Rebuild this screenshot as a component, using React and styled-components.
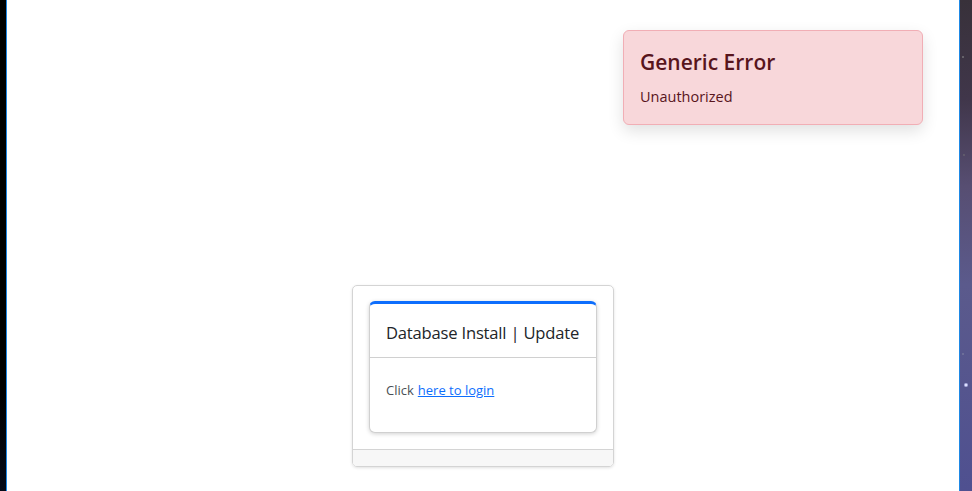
import React from "react";
import styled, { createGlobalStyle } from "styled-components";

const Global = createGlobalStyle`
  html, body {
    margin: 0;
    padding: 0;
    height: 491px;
    overflow: hidden;
  }
  body {
    font-family: "Open Sans", "Noto Sans", sans-serif;
  }
  #root {
    height: 100%;
  }
`;

const Desktop = styled.div`
  display: flex;
  height: 491px;
  width: 972px;
`;

const LeftEdge = styled.div`
  width: 6px;
  background: linear-gradient(to bottom, #000 0%, #000 80%, #050a18 100%);
`;

const RightEdge = styled.div`
  width: 12px;
  background:
    radial-gradient(circle at 6px 385px, #fff 0, #cfd3ff 1px, transparent 2.5px),
    radial-gradient(circle at 3px 57px, #8a8a8a 0, transparent 1.5px),
    radial-gradient(circle at 4px 155px, #777 0, transparent 1.2px),
    radial-gradient(circle at 3px 354px, #8a8fa8 0, transparent 1.2px),
    linear-gradient(to bottom, #38313a 0%, #40364a 20%, #574e72 38%, #5b5a8c 58%, #4f5090 100%);
`;

const Window = styled.main`
  position: relative;
  flex: 1;
  background: #fff;
  border-left: 1px solid #1e88e5;
  border-right: 1px solid #1e88e5;
  display: flex;
  flex-direction: column;
  align-items: center;
  padding-top: 285px;
  box-sizing: border-box;
`;

const Toast = styled.div`
  position: absolute;
  top: 30px;
  right: 36px;
  width: 300px;
  height: 95px;
  box-sizing: border-box;
  padding: 15px 16px;
  background: #f8d7da;
  border: 1px solid #f1aeb5;
  border-radius: 6px;
  box-shadow: 0 6px 16px rgba(0, 0, 0, 0.12);
  color: #58151c;
`;

const ToastTitle = styled.h4`
  margin: 0 0 9px;
  font-size: 21px;
  font-weight: 600;
  line-height: 32px;
`;

const ToastText = styled.p`
  margin: 0;
  font-size: 14.5px;
  line-height: 20px;
`;

const Frame = styled.section`
  width: 262px;
  box-sizing: border-box;
  border: 1px solid #d4d4d4;
  border-radius: 5px;
  box-shadow: 0 1px 3px rgba(0, 0, 0, 0.12);
  overflow: hidden;
`;

const FrameBody = styled.div`
  padding: 15px 16px 16px;
  border-bottom: 1px solid #d4d4d4;
`;

const FrameFooter = styled.div`
  height: 16px;
  background: #f7f7f7;
`;

const Card = styled.div`
  border: 1px solid #d0d0d0;
  border-top: 3px solid #0d6efd;
  border-radius: 6px;
  box-shadow: 0 1px 4px rgba(0, 0, 0, 0.18);
  background: #fff;
`;

const CardHeader = styled.div`
  height: 54px;
  box-sizing: border-box;
  padding: 3px 16px 0;
  display: flex;
  align-items: center;
  white-space: nowrap;
  border-bottom: 1px solid #d0d0d0;
  font-size: 16.6px;
  letter-spacing: -0.2px;
  color: #212529;
`;

const CardBody = styled.div`
  height: 74px;
  box-sizing: border-box;
  padding: 22px 16px 0;
  font-size: 13px;
  line-height: 20px;
  color: #4a4f55;
`;

const Link = styled.a`
  color: #0d6efd;
  text-decoration: underline;
  margin-left: 4px;
`;

export default function App() {
  return (
    <>
      <Global />
      <Desktop>
        <LeftEdge />
        <Window>
          <Toast role="alert">
            <ToastTitle>Generic Error</ToastTitle>
            <ToastText>Unauthorized</ToastText>
          </Toast>
          <Frame>
            <FrameBody>
              <Card>
                <CardHeader>Database Install | Update</CardHeader>
                <CardBody>
                  Click<Link href="#">here to login</Link>
                </CardBody>
              </Card>
            </FrameBody>
            <FrameFooter />
          </Frame>
        </Window>
        <RightEdge />
      </Desktop>
    </>
  );
}
